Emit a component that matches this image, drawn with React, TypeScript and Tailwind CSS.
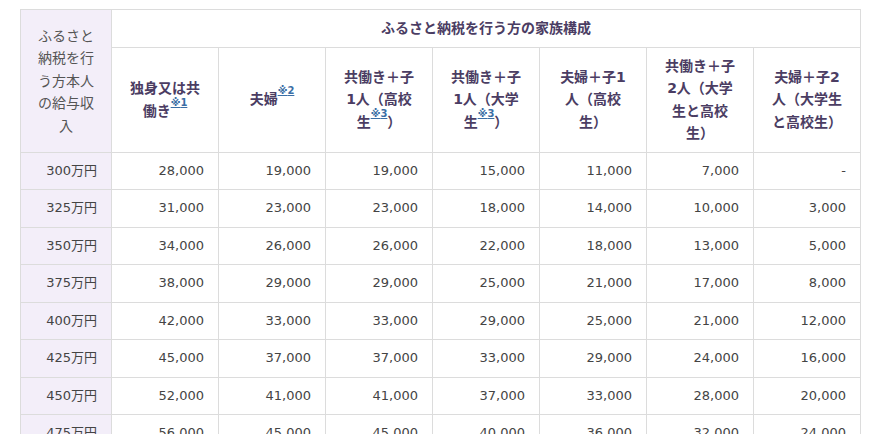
import React from 'react';

// table of furusato-nozei limits by income and family type
const rows: [string, string[]][] = [
  ['300万円', ['28,000', '19,000', '19,000', '15,000', '11,000', '7,000', '-']],
  ['325万円', ['31,000', '23,000', '23,000', '18,000', '14,000', '10,000', '3,000']],
  ['350万円', ['34,000', '26,000', '26,000', '22,000', '18,000', '13,000', '5,000']],
  ['375万円', ['38,000', '29,000', '29,000', '25,000', '21,000', '17,000', '8,000']],
  ['400万円', ['42,000', '33,000', '33,000', '29,000', '25,000', '21,000', '12,000']],
  ['425万円', ['45,000', '37,000', '37,000', '33,000', '29,000', '24,000', '16,000']],
  ['450万円', ['52,000', '41,000', '41,000', '37,000', '33,000', '28,000', '20,000']],
  ['475万円', ['56,000', '45,000', '45,000', '40,000', '36,000', '32,000', '24,000']],
];

const Note = ({ n }: { n: string }) => (
  <sup className="text-[10px] font-bold text-[#3b6ea5] underline align-[5px] leading-none">
    ※{n}
  </sup>
);

const headers: React.ReactNode[] = [
  <>独身又は共<br />働き<Note n="1" /></>,
  <>夫婦<Note n="2" /></>,
  <>共働き＋子<br />1人（高校<br />生<Note n="3" />）</>,
  <>共働き＋子<br />1人（大学<br />生<Note n="3" />）</>,
  <>夫婦＋子1<br />人（高校<br />生）</>,
  <>共働き＋子<br />2人（大学<br />生と高校<br />生）</>,
  <>夫婦＋子2<br />人（大学生<br />と高校生）</>,
];

const cell = 'border border-[#dcdcdc] px-[14px] py-[7px]';

export default function App() {
  return (
    <div
      className="w-[878px] h-[434px] overflow-hidden bg-white pl-[20px] pt-[9px]"
      style={{ fontFamily: '"DejaVu Sans", "Noto Sans CJK JP", sans-serif' }}
    >
      <table className="border-collapse table-fixed w-[840px] text-[14px] leading-[22.5px]">
        <colgroup>
          <col className="w-[91px]" />
          {headers.map((_, i) => (
            <col key={i} className="w-[107px]" />
          ))}
        </colgroup>
        <thead>
          <tr>
            <th
              rowSpan={2}
              className={`${cell} bg-[#f3eef9] font-normal text-[#555] text-center`}
            >
              ふるさと納税を行う方本人の給与収入
            </th>
            <th colSpan={7} className={`${cell} font-bold text-[#4b3d63] text-center`}>
              ふるさと納税を行う方の家族構成
            </th>
          </tr>
          <tr>
            {headers.map((h, i) => (
              <th
                key={i}
                className={`${cell} px-[8px] font-bold text-[#4b3d63] text-center whitespace-nowrap`}
              >
                {h}
              </th>
            ))}
          </tr>
        </thead>
        <tbody>
          {rows.map(([income, vals]) => (
            <tr key={income}>
              <td className={`${cell} bg-[#f3eef9] text-right text-[13px] text-[#444]`}>{income}</td>
              {vals.map((v, i) => (
                <td key={i} className={`${cell} text-right text-[13px] text-[#444]`}>
                  {v}
                </td>
              ))}
            </tr>
          ))}
        </tbody>
      </table>
    </div>
  );
}
